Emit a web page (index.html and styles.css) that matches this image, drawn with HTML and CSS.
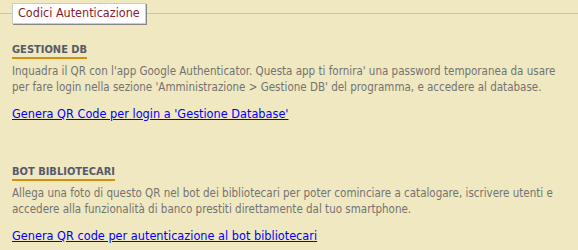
FILE: index.html
```html
<!DOCTYPE html>
<html lang="it">
<head>
  <meta charset="UTF-8" />
  <title>Codici Autenticazione</title>
  <link rel="stylesheet" href="styles.css">
</head>
<body>
  <fieldset class="panel">
    <legend>Codici Autenticazione</legend>

    <div class="block">
      <h3>GESTIONE DB</h3>
      <p class="info">Inquadra il QR con l'app Google Authenticator. Questa app ti fornira' una password temporanea da usare per fare login nella sezione 'Amministrazione &gt; Gestione DB' del programma, e accedere al database.</p>
      <p><a href="#">Genera QR Code per login a 'Gestione Database'</a></p>
    </div>

    <div class="block">
      <h3>BOT BIBLIOTECARI</h3>
      <p class="info">Allega una foto di questo QR nel bot dei bibliotecari per poter cominciare a catalogare, iscrivere utenti e accedere alla funzionalità di banco prestiti direttamente dal tuo smartphone.</p>
      <p><a href="#">Genera QR code per autenticazione al bot bibliotecari</a></p>
    </div>
  </fieldset>
</body>
</html>
```

FILE: styles.css
```css
body {
  margin: 0;
  padding: 0;
  background-color: #efe8c0;
  font-family: "DejaVu Sans Condensed", "DejaVu Sans", sans-serif;
  font-size: 11.5px;
  line-height: 16px;
  color: #737373;
}
.panel {
  margin: 3px 0 0 0;
  padding: 0 12px;
  border: none;
  border-top: 1px solid #c9c4a4;
}
.panel legend {
  padding: 1px 5px 2px 5px;
  background-color: #fff;
  color: #8b1a2b;
  font-size: 12.5px;
  border: 1px solid #ccc;
  box-shadow: 1px 1px 0 #888;
}
.block {
  margin-top: 17px;
}
.block + .block {
  margin-top: 41px;
}
.block h3 {
  display: inline-block;
  margin: 0;
  font-size: 11px;
  line-height: 15px;
  color: #55596a;
  border-bottom: 2px solid #d4900c;
}
.block p {
  margin: 4px 0 0 0;
}
.block p.info {
  margin-bottom: 11px;
}
.block a {
  color: #0000ff;
  font-size: 12.6px;
}
```
